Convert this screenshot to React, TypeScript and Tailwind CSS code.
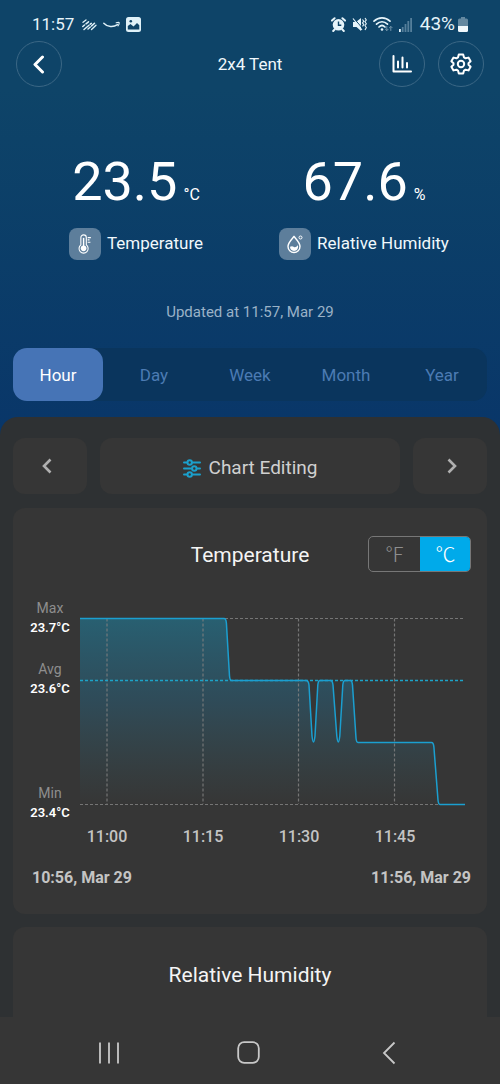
import { useState } from "react";

const ranges = ["Hour", "Day", "Week", "Month", "Year"];
const ticks = ["11:00", "11:15", "11:30", "11:45"];

const linePath =
  "M0 1.5H144Q146 1.5 146.400 6L149.500 59Q150 63.500 151.500 63.500H226Q228.500 63.500 229 68L232 119Q233.500 131 235 119L237.800 68Q238.300 63.500 240 63.500H250.500Q252.500 63.500 253 68L256.800 119Q258.300 131 259.800 119L262.800 68Q263.300 63.500 265 63.500H270.500Q272 63.500 272.500 68L276 121Q276.400 125.500 278 125.500H351.500Q353.500 125.500 353.900 130L358 183Q358.400 187.500 360 187.500H385";

function NotificationIcons() {
  return (
    <div className="flex items-center gap-1.5 text-[#dff1f8]">
      <svg width="15" height="12" viewBox="0 0 15 12" fill="none" stroke="currentColor" strokeLinecap="round" aria-hidden="true">
        <path d="M1 3.300L4 1" strokeWidth="1.300" />
        <path d="M.8 7.500L2.500 6M4 4.800L6.500 2.800" strokeWidth="1.500" />
        <path d="M2 10.500L7 6.300M8.300 5.200L9.300 4.400" strokeWidth="1.500" />
        <path d="M6 10L8.300 8M9.600 6.900L12.500 4.200" strokeWidth="1.500" />
        <path d="M9.500 10.500L14 6.200" strokeWidth="1.300" />
      </svg>
      <svg width="17" height="8" viewBox="0 0 17 8" fill="none" stroke="currentColor" strokeLinecap="round" aria-hidden="true">
        <path d="M.8 2.200C4.500 6.300 10.500 6.500 14.500 3.600" strokeWidth="1.400" />
        <path d="M13.200 1.800C15 1.200 16.200 1.200 16.200 1.700C16.300 2.600 15.800 4 15 4.900" strokeWidth="1.100" />
      </svg>
      <svg width="15" height="15" viewBox="0 0 15 15" aria-hidden="true">
        <rect width="15" height="15" rx="2.500" fill="currentColor" />
        <path d="M1.800 12.500V9L4.500 7l3 2.500L11 6l2.300 2.300v4.200z" fill="#0e4468" />
        <circle cx="4.800" cy="4.200" r="1.300" fill="#0e4468" />
      </svg>
    </div>
  );
}

function SystemIcons() {
  return (
    <div className="flex items-center gap-1.5 text-[#e6f4fa]">
      <svg width="15" height="15" viewBox="0 0 15 15" fill="none" aria-hidden="true">
        <circle cx="7.500" cy="7.800" r="5.800" fill="currentColor" />
        <path d="M1 3.600L3.600 1.200M14 3.600L11.400 1.200M3.600 12.500L2.200 14M11.400 12.500L12.800 14" stroke="currentColor" strokeWidth="2" strokeLinecap="round" />
        <path d="M7.500 4.500V8.200H10.300" stroke="#0e4468" strokeWidth="1.400" />
      </svg>
      <svg width="15" height="15" viewBox="0 0 15 15" fill="none" stroke="currentColor" aria-hidden="true">
        <path d="M1 5h3L9 1v13L4.500 10H1z" fill="currentColor" stroke="none" />
        <path d="M1.500 .8L11 12" stroke="#0e4468" strokeWidth="1" />
        <path d="M1 1.500L10 13" strokeWidth="1.200" />
        <path d="M10.500 2.500l1.300 1.700-1.300 1.700 1.300 1.700-1.300 1.700M13 1l1.300 1.900L13 4.800l1.300 1.900L13 8.600l1.300 1.900L13 13" strokeWidth="1.100" />
      </svg>
      <svg width="20" height="15" viewBox="0 0 20 15" fill="none" stroke="currentColor" strokeLinecap="round" aria-hidden="true">
        <path d="M1 4.200C5.500-.2 12.500-.2 17 4.200" strokeWidth="1.700" />
        <path d="M3.500 7.200C6.800 4 11.200 4 14.500 7.200" strokeWidth="1.700" />
        <path d="M6 10C8 8 10 8 12 10" strokeWidth="1.700" />
        <circle cx="9" cy="12.500" r="1.300" fill="currentColor" stroke="none" />
        <path d="M13.800 9.500v4M12.400 12.200l1.400 1.400 1.400-1.400M17.800 13.500v-4M16.400 10.800l1.400-1.400 1.400 1.400" stroke="#6f93aa" strokeWidth="1" />
      </svg>
      <svg width="13" height="14" viewBox="0 0 13 14" aria-hidden="true">
        <rect x="0" y="11" width="1.800" height="3" fill="currentColor" />
        <path d="M2.800 9h1.800v5H2.800zM5.600 6h1.800v8H5.600zM8.400 3h1.800v11H8.400zM11.200 0H13v14h-1.800z" fill="#557f9b" />
      </svg>
    </div>
  );
}

function ThermometerIcon() {
  return (
    <svg width="15" height="20" viewBox="0 0 16 22" fill="none" stroke="#fff" aria-hidden="true">
      <path d="M4 12V4a3 3 0 0 1 6 0v8a5 5 0 1 1-6 0z" strokeWidth="1.200" />
      <circle cx="7" cy="15.800" r="3.100" fill="#fff" stroke="none" />
      <path d="M7 5v10" strokeWidth="1.600" strokeLinecap="round" />
      <path d="M11.500 4h3.500M11.500 6.500h2M11.500 9h3" strokeWidth="1.200" />
    </svg>
  );
}

function DropIcon() {
  return (
    <svg width="18" height="20" viewBox="0 0 18 20" fill="none" stroke="#fff" aria-hidden="true">
      <path d="M8 2.500C5.500 5.500 2 8.800 2 12.500a6 6 0 0 0 12 0C14 8.800 10.500 5.500 8 2.500z" strokeWidth="1.400" />
      <path d="M4 12.800c1.400-1 2.800-.8 4 .1 1.300.6 2.500 0 3.900-1.700.8 2.900-.9 5.700-3.900 5.700-2.300 0-4-1.700-4-4.100z" fill="#fff" stroke="none" />
      <circle cx="14.500" cy="3.500" r="1.500" strokeWidth="1" />
    </svg>
  );
}

function Reading({ value, unit, label, icon }: { value: string; unit: string; label: string; icon: React.ReactNode }) {
  return (
    <div className="flex flex-col items-center">
      <p className="flex items-baseline gap-1.5 text-white">
        <span className="text-[54px] leading-[64px]">{value}</span>
        <span className="text-base">{unit}</span>
      </p>
      <div className="mt-[14px] flex items-center gap-1.5">
        <span className="flex size-8 items-center justify-center rounded-lg bg-[#5d7e9b]">{icon}</span>
        <span className="text-[17px] text-[#f0f8fc]">{label}</span>
      </div>
    </div>
  );
}

function AxisLabel({ name, value }: { name: string; value: string }) {
  return (
    <div className="text-center">
      <p className="text-sm leading-5 text-[#8e8e8e]">{name}</p>
      <p className="text-[13px] leading-5 font-semibold text-white">{value}</p>
    </div>
  );
}

function TemperatureChart() {
  return (
    <svg className="block h-[189px] w-full" viewBox="0 0 385 189" preserveAspectRatio="none" fill="none" role="img" aria-label="Temperature over the last hour">
      <defs>
        <linearGradient id="area" x1="0" y1="0" x2="0" y2="1">
          <stop offset="0" stopColor="#1b86a8" stopOpacity=".52" />
          <stop offset=".45" stopColor="#2077a0" stopOpacity=".32" />
          <stop offset="1" stopColor="#367a8a" stopOpacity="0" />
        </linearGradient>
      </defs>
      <path d={linePath + "H0Z"} fill="url(#area)" />
      <path d="M0 1.500H385M0 187.500H385M27 1.500V187M123 1.500V187M218.500 1.500V187M314.500 1.500V187" stroke="#808080" strokeOpacity=".85" strokeWidth="1.200" strokeDasharray="3 2" />
      <path d="M0 63.500H385" stroke="#1da3c8" strokeWidth="1.400" strokeDasharray="3 2" />
      <path d={linePath} stroke="#1b9fd0" strokeWidth="1.500" strokeLinejoin="round" />
    </svg>
  );
}

export default function App() {
  const [range, setRange] = useState("Hour");
  const [unit, setUnit] = useState("C");
  const circle = "flex size-[46px] items-center justify-center rounded-full border border-[#3b6785] text-white";

  return (
    <div className="flex min-h-screen flex-col bg-[#2e3133] font-['Roboto',sans-serif]">
      <div className="bg-linear-to-b from-[#0e4468] from-20% to-[#093669]">
        <div className="flex h-[41px] items-center justify-between px-8 pt-2 text-[#e6f4fa]">
          <div className="flex items-center gap-2">
            <span className="text-[17px]">11:57</span>
            <NotificationIcons />
          </div>
          <div className="flex items-center gap-2">
            <SystemIcons />
            <div className="flex items-center gap-[3px]">
              <span className="text-[19px]">43%</span>
              <svg width="10" height="15" viewBox="0 0 10 15" aria-hidden="true">
                <path d="M3 0h4v1.500h1.500A1.500 1.500 0 0 1 10 3v6H0V3a1.500 1.500 0 0 1 1.500-1.500H3z" fill="#6388a0" />
                <path d="M0 9h10v4.500A1.500 1.500 0 0 1 8.500 15h-7A1.500 1.500 0 0 1 0 13.500z" fill="#f0f8fc" />
              </svg>
            </div>
          </div>
        </div>

        <header className="grid grid-cols-[1fr_auto_1fr] items-center px-4">
          <button aria-label="Back" className={circle}>
            <svg width="12" height="19" viewBox="0 0 12 19" fill="none" stroke="currentColor" strokeWidth="3" strokeLinecap="round" strokeLinejoin="round">
              <path d="M9.500 2L2 9.500L9.500 17" />
            </svg>
          </button>
          <h1 className="pt-0.5 text-[17px] text-[#f0f8fc]">2x4 Tent</h1>
          <div className="flex justify-end gap-[13px]">
            <button aria-label="Statistics" className={circle}>
              <svg width="20" height="18" viewBox="0 0 20 18" fill="none" stroke="currentColor" strokeWidth="2" strokeLinecap="round" strokeLinejoin="round">
                <path d="M1.500 1v15.500H19M6 6.500V12.500M10.500 2.500V12.500M15 8V12.500" />
              </svg>
            </button>
            <button aria-label="Settings" className={circle}>
              <svg width="22" height="22" viewBox="0 0 22 22" fill="none" stroke="currentColor" strokeWidth="2" strokeLinejoin="round">
                <path d="M8.800 1.500h4.400l.8 2.900 1.600.9 2.900-.7 2.100 3.700-2.100 2v1.400l2.100 2-2.100 3.700-2.900-.7-1.600.9-.8 2.900H8.800L8 17.600l-1.600-.9-2.900.7-2.100-3.700 2.100-2v-1.400l-2.100-2 2.100-3.700 2.900.7L8 4.400z" />
                <circle cx="11" cy="11" r="3.200" />
              </svg>
            </button>
          </div>
        </header>

        <section className="mt-[63px] grid grid-cols-2 px-[22px]">
          <Reading value="23.5" unit="°C" label="Temperature" icon={<ThermometerIcon />} />
          <Reading value="67.6" unit="%" label="Relative Humidity" icon={<DropIcon />} />
        </section>

        <p className="mt-[42px] text-center text-[15px] leading-5 text-[#9ab2c7]">Updated at 11:57, Mar 29</p>

        <div className="px-[13px] pt-[26px]">
          <nav className="grid grid-cols-5 gap-1.5 rounded-[14px] bg-[#0a355d]">
            {ranges.map((r) => (
              <button
                key={r}
                onClick={() => setRange(r)}
                className={
                  "h-[53px] rounded-[14px] pt-0.5 text-[17px] " +
                  (r === range ? "bg-[#4674b6] text-white" : "text-[#4c7bb3]")
                }
              >
                {r}
              </button>
            ))}
          </nav>
        </div>
        <div className="mt-4 h-[21px] rounded-t-[18px] bg-[#2e3133]" />
      </div>

      <main className="flex grow flex-col px-[13px]">
        <div className="flex gap-[13px]">
          <button aria-label="Previous" className="flex h-14 w-[74px] items-center justify-center rounded-xl bg-[#363636] pr-1.5 text-[#b0b0b0]">
            <svg width="10" height="16" viewBox="0 0 10 16" fill="none" stroke="currentColor" strokeWidth="2.600">
              <path d="M8.500 1.500L2 8L8.500 14.500" />
            </svg>
          </button>
          <button className="flex h-14 grow items-center justify-center gap-2 rounded-xl bg-[#363636] pt-1 text-[19px] text-[#d0d0d0]">
            <svg width="18" height="19" viewBox="0 0 18 19" fill="none" stroke="#1ba0cc" strokeWidth="2" strokeLinecap="round">
              <path d="M1 3.500h3M9.500 3.500H17M1 9.500h7.500M14 9.500h3M1 15.500h3M9.500 15.500H17" />
              <circle cx="6.700" cy="3.500" r="2.200" />
              <circle cx="11.300" cy="9.500" r="2.200" />
              <circle cx="6.700" cy="15.500" r="2.200" />
            </svg>
            Chart Editing
          </button>
          <button aria-label="Next" className="flex h-14 w-[74px] items-center justify-center rounded-xl bg-[#363636] pl-1 text-[#b0b0b0]">
            <svg width="10" height="16" viewBox="0 0 10 16" fill="none" stroke="currentColor" strokeWidth="2.600">
              <path d="M1.500 1.500L8 8L1.500 14.500" />
            </svg>
          </button>
        </div>

        <section className="mt-[14px] rounded-xl bg-[#363636] px-4 pt-7 pb-6">
          <div className="grid grid-cols-[1fr_auto_1fr] items-center">
            <h2 className="col-start-2 pt-0.5 text-[21px] leading-8 text-[#f4f4f4]">Temperature</h2>
            <div className="flex h-9 w-[103px] justify-self-end overflow-hidden rounded-[5px] border border-[#777777] font-['Noto_Sans_CJK_SC',sans-serif] text-xl leading-none font-light">
              {[
                ["F", "℉"],
                ["C", "℃"],
              ].map(([key, glyph]) => (
                <button
                  key={key}
                  onClick={() => setUnit(key)}
                  className={"grow basis-0 " + (unit === key ? "-my-px -mr-px bg-[#00aaea] text-white" : "text-[#8e8e8e]")}
                >
                  {glyph}
                </button>
              ))}
            </div>
          </div>

          <div className="mt-[26px] flex">
            <div className="w-[51px] shrink-0 pr-[9px]">
              <div className="-mx-1">
                <AxisLabel name="Max" value="23.7°C" />
                <div className="mt-[21px]">
                  <AxisLabel name="Avg" value="23.6°C" />
                </div>
                <div className="mt-[84px]">
                  <AxisLabel name="Min" value="23.4°C" />
                </div>
              </div>
            </div>
            <div className="grow pt-[19px] pr-1.5">
              <TemperatureChart />
            </div>
          </div>

          <div className="mt-0.5 grid grid-cols-4 pr-[28px] pl-[30px] text-center text-base leading-6 font-medium text-[#c4c4c4]">
            {ticks.map((t) => (
              <span key={t}>{t}</span>
            ))}
          </div>

          <div className="mt-[17px] flex justify-between pl-[3px] text-base leading-6 font-bold text-[#c4c4c4]">
            <span>10:56, Mar 29</span>
            <span>11:56, Mar 29</span>
          </div>
        </section>

        <section className="mt-[13px] min-h-[90px] grow rounded-t-xl bg-[#363636] pt-8 text-center">
          <h2 className="text-[21px] leading-8 text-[#f4f4f4]">Relative Humidity</h2>
        </section>
      </main>

      <nav className="flex h-[67px] items-center justify-between bg-[#363636] pt-1 pr-[102px] pl-[98px] text-[#c8c8c8]">
        <button aria-label="Recent apps">
          <svg width="22" height="22" viewBox="0 0 22 22" stroke="currentColor" strokeWidth="1.800">
            <path d="M2 .5v21M11 .5v21M20 .5v21" />
          </svg>
        </button>
        <button aria-label="Home">
          <svg width="23" height="23" viewBox="0 0 23 23" fill="none" stroke="currentColor" strokeWidth="1.800">
            <rect x="1.200" y="1.200" width="20.600" height="20.600" rx="6" />
          </svg>
        </button>
        <button aria-label="Go back">
          <svg width="22" height="24" viewBox="0 0 22 24" fill="none" stroke="currentColor" strokeWidth="1.800">
            <path d="M18.500 1.500L8 12L18.500 22.500" />
          </svg>
        </button>
      </nav>
    </div>
  );
}
